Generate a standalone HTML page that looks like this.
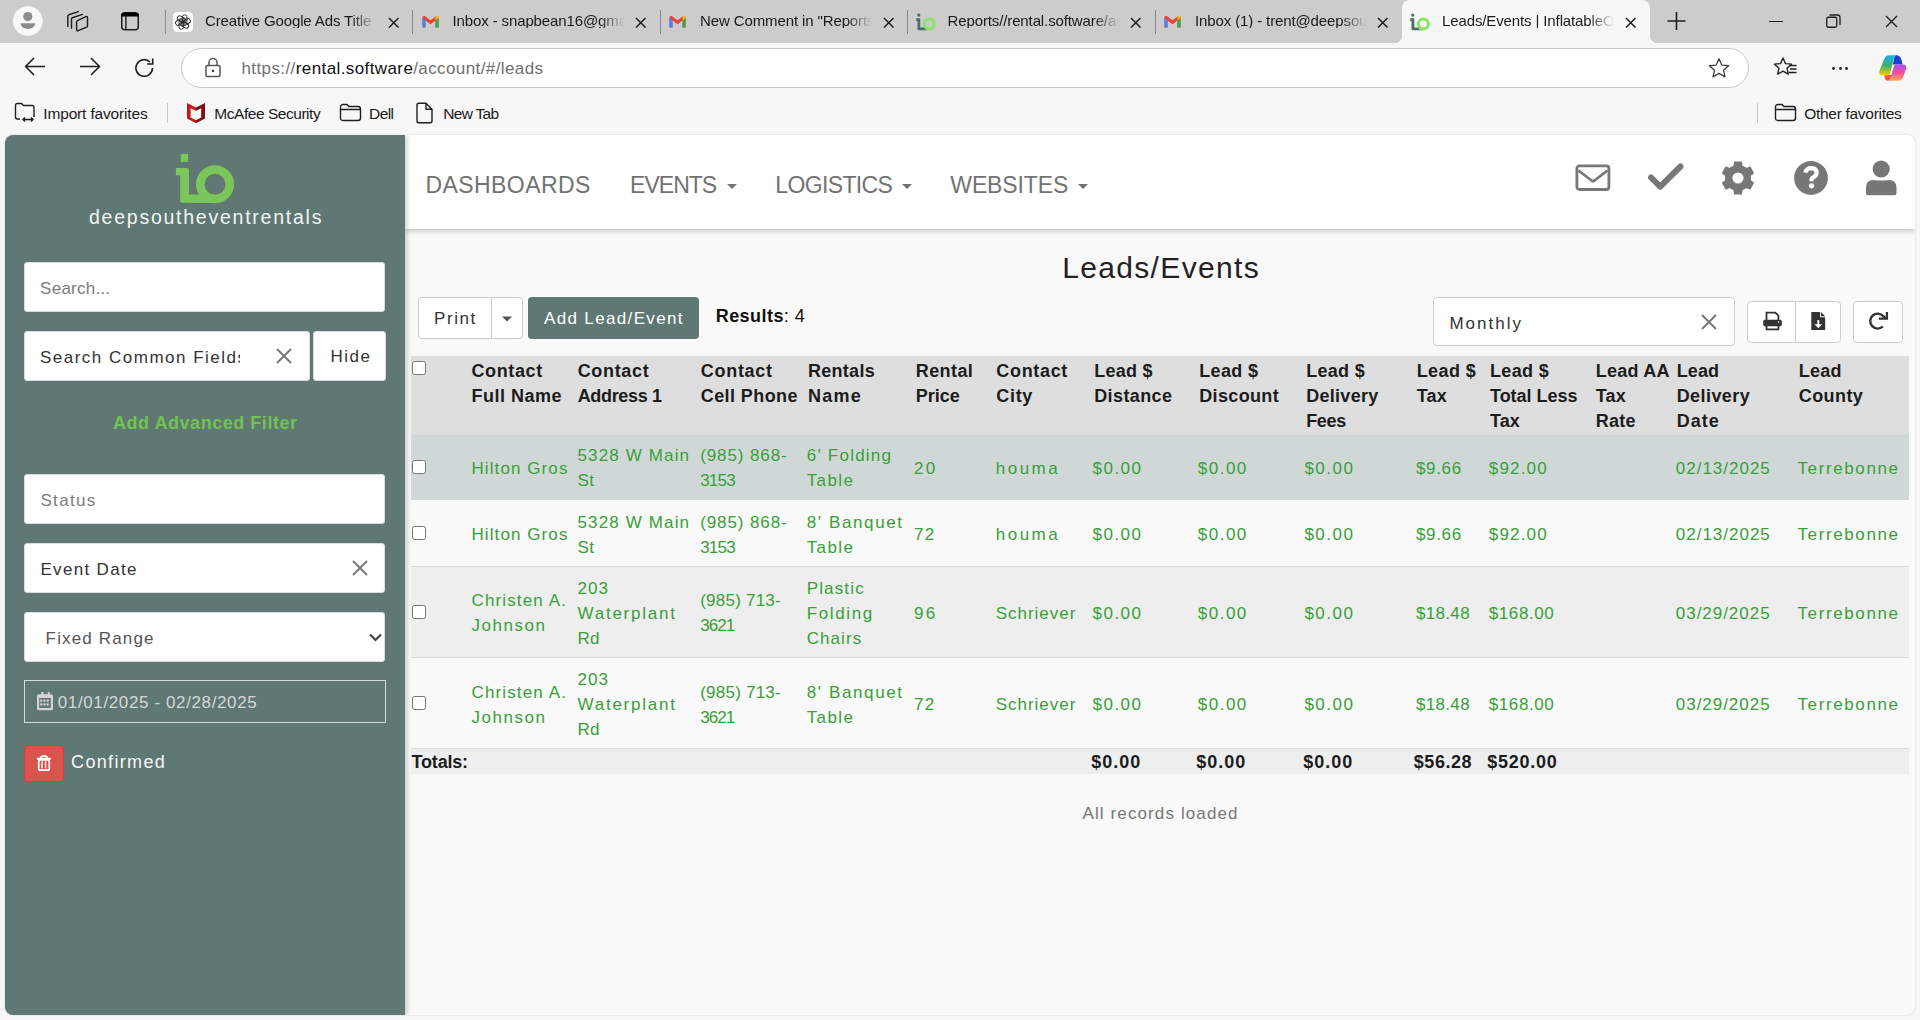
<!DOCTYPE html>
<html><head><meta charset="utf-8"><title>Leads/Events</title>
<style>
html,body{margin:0;padding:0;width:1920px;height:1020px;overflow:hidden;background:#f7f7f7;font-family:"Liberation Sans", sans-serif;}
.r{position:absolute;box-sizing:border-box;}
.t{position:absolute;white-space:nowrap;}
</style></head><body>
<div class="r" style="left:0px;top:0px;width:1920px;height:43px;background:#cccccc"></div>
<div class="r" style="left:0px;top:43px;width:1920px;height:92px;background:#f7f7f7"></div>
<svg class="r" style="left:12px;top:5px;" width="32" height="32" viewBox="0 0 32 32"><circle cx="15.8" cy="16" r="14.8" fill="#f8f8f8"/><circle cx="15.8" cy="11.6" r="4.6" fill="#8c8c8c"/><path d="M9 18.2 H22.8 Q23.2 18.2 23.1 18.8 Q22.4 23.8 15.9 23.9 Q9.4 23.8 8.7 18.8 Q8.6 18.2 9 18.2Z" fill="#8c8c8c"/></svg>
<svg class="r" style="left:64px;top:8px;" width="28" height="26" viewBox="0 0 28 26"><g fill="none" stroke="#1f1f1f" stroke-width="1.45" stroke-linejoin="round" stroke-linecap="round"><path d="M3.8 18.4 V8.2 Q3.8 7.2 4.8 6.8 L14.4 3.6"/><path d="M7.5 20.3 V11.1 Q7.5 10.1 8.5 9.7 L18.4 6.4"/><path d="M12.6 21.3 V13.8 Q12.6 12.9 13.5 12.6 L21.8 8.6 Q23.5 8 23.5 9.6 V17.8 Q23.5 18.8 22.6 19.2 L14.2 22.6 Q12.6 23.2 12.6 21.3Z"/></g></svg>
<svg class="r" style="left:119px;top:10px;" width="22" height="22" viewBox="0 0 22 22"><rect x="2.75" y="2.95" width="16.5" height="16.7" rx="3" fill="none" stroke="#1f1f1f" stroke-width="1.5"/><path d="M2 6 Q2 2.2 5.8 2.2 H16.2 Q20 2.2 20 6 V6.6 H2Z" fill="#000"/><line x1="6.9" y1="6" x2="6.9" y2="19.5" stroke="#1f1f1f" stroke-width="1.4"/></svg>
<div class="r" style="left:164.5px;top:10px;width:1.3px;height:24px;background:#8a8a8a"></div>
<svg class="r" style="left:173.0px;top:12px;" width="20" height="20" viewBox="0 0 20 20"><rect x="0" y="0" width="20" height="20" rx="4.5" fill="#fff"/><g transform="translate(10 10)" fill="none" stroke="#2a2a2a" stroke-width="0.95"><rect x="-2.3" y="-7.2" width="4.6" height="9.4" rx="2.3" transform="rotate(0) translate(1.7 0)"/><rect x="-2.3" y="-7.2" width="4.6" height="9.4" rx="2.3" transform="rotate(60) translate(1.7 0)"/><rect x="-2.3" y="-7.2" width="4.6" height="9.4" rx="2.3" transform="rotate(120) translate(1.7 0)"/><rect x="-2.3" y="-7.2" width="4.6" height="9.4" rx="2.3" transform="rotate(180) translate(1.7 0)"/><rect x="-2.3" y="-7.2" width="4.6" height="9.4" rx="2.3" transform="rotate(240) translate(1.7 0)"/><rect x="-2.3" y="-7.2" width="4.6" height="9.4" rx="2.3" transform="rotate(300) translate(1.7 0)"/></g></svg>
<div class="t" style="left:205.0px;top:13px;width:172px;overflow:hidden;font-size:15px;line-height:15px;color:#1a1a1a;letter-spacing:-0.12px;-webkit-mask-image:linear-gradient(to right,#000 85%,transparent 100%)">Creative Google Ads Title</div>
<svg class="r" style="left:387.5px;top:16.5px;" width="11.5" height="11.5" viewBox="0 0 11.5 11.5"><path d="M1 1 L10.5 10.5 M10.5 1 L1 10.5" stroke="#1f1f1f" stroke-width="1.5" fill="none"/></svg>
<div class="r" style="left:412px;top:10px;width:1.3px;height:24px;background:#8a8a8a"></div>
<svg class="r" style="left:420.5px;top:14px;" width="19" height="15" viewBox="0 0 19 15"><path d="M1.5 3.5 L1.5 13.5 L4.5 13.5 L4.5 6.5 L9.5 10.2 L14.5 6.5 L14.5 13.5 L17.5 13.5 L17.5 3.5 Q17.5 1.3 15.3 2 L9.5 6.3 L3.7 2 Q1.5 1.3 1.5 3.5Z" fill="#ea4335"/><path d="M1.5 3.5 L1.5 13.5 L4.5 13.5 L4.5 6.5Z" fill="#4285f4"/><path d="M14.5 6.5 L14.5 13.5 L17.5 13.5 L17.5 3.5Z" fill="#34a853"/><path d="M17.5 3.5 Q17.5 1.3 15.3 2 L14.5 2.6 L14.5 6.5 L17.5 4.3Z" fill="#fbbc04"/></svg>
<div class="t" style="left:452.5px;top:13px;width:172px;overflow:hidden;font-size:15px;line-height:15px;color:#1a1a1a;letter-spacing:-0.12px;-webkit-mask-image:linear-gradient(to right,#000 85%,transparent 100%)">Inbox - snapbean16@gmail.com</div>
<svg class="r" style="left:635px;top:16.5px;" width="11.5" height="11.5" viewBox="0 0 11.5 11.5"><path d="M1 1 L10.5 10.5 M10.5 1 L1 10.5" stroke="#1f1f1f" stroke-width="1.5" fill="none"/></svg>
<div class="r" style="left:659.6px;top:10px;width:1.3px;height:24px;background:#8a8a8a"></div>
<svg class="r" style="left:668.1px;top:14px;" width="19" height="15" viewBox="0 0 19 15"><path d="M1.5 3.5 L1.5 13.5 L4.5 13.5 L4.5 6.5 L9.5 10.2 L14.5 6.5 L14.5 13.5 L17.5 13.5 L17.5 3.5 Q17.5 1.3 15.3 2 L9.5 6.3 L3.7 2 Q1.5 1.3 1.5 3.5Z" fill="#ea4335"/><path d="M1.5 3.5 L1.5 13.5 L4.5 13.5 L4.5 6.5Z" fill="#4285f4"/><path d="M14.5 6.5 L14.5 13.5 L17.5 13.5 L17.5 3.5Z" fill="#34a853"/><path d="M17.5 3.5 Q17.5 1.3 15.3 2 L14.5 2.6 L14.5 6.5 L17.5 4.3Z" fill="#fbbc04"/></svg>
<div class="t" style="left:700.1px;top:13px;width:172px;overflow:hidden;font-size:15px;line-height:15px;color:#1a1a1a;letter-spacing:-0.12px;-webkit-mask-image:linear-gradient(to right,#000 85%,transparent 100%)">New Comment in &quot;Reports&quot; and more</div>
<svg class="r" style="left:882.5px;top:16.5px;" width="11.5" height="11.5" viewBox="0 0 11.5 11.5"><path d="M1 1 L10.5 10.5 M10.5 1 L1 10.5" stroke="#1f1f1f" stroke-width="1.5" fill="none"/></svg>
<div class="r" style="left:907px;top:10px;width:1.3px;height:24px;background:#8a8a8a"></div>
<svg class="r" style="left:915.5px;top:12px;" width="20" height="19" viewBox="0 0 20 19"><circle cx="2.8" cy="3.1" r="1.6" fill="#4f6b66"/><path d="M0.2 6.2 H3.2 Q4.3 6.2 4.3 7.3 V15.6 H12 V18.2 H2.8 Q1.5 18.2 1.5 16.9 V8.9 H0.2Z" fill="#4f6b66"/><circle cx="13.4" cy="12" r="4.95" fill="none" stroke="#8be368" stroke-width="3.1"/><path d="M9 15.6 H13.4 V18.2 H9Z" fill="#8be368" opacity="0.6"/></svg>
<div class="t" style="left:947.5px;top:13px;width:172px;overflow:hidden;font-size:15px;line-height:15px;color:#1a1a1a;letter-spacing:-0.12px;-webkit-mask-image:linear-gradient(to right,#000 85%,transparent 100%)">Reports//rental.software/account</div>
<svg class="r" style="left:1130px;top:16.5px;" width="11.5" height="11.5" viewBox="0 0 11.5 11.5"><path d="M1 1 L10.5 10.5 M10.5 1 L1 10.5" stroke="#1f1f1f" stroke-width="1.5" fill="none"/></svg>
<div class="r" style="left:1154.5px;top:10px;width:1.3px;height:24px;background:#8a8a8a"></div>
<svg class="r" style="left:1163.0px;top:14px;" width="19" height="15" viewBox="0 0 19 15"><path d="M1.5 3.5 L1.5 13.5 L4.5 13.5 L4.5 6.5 L9.5 10.2 L14.5 6.5 L14.5 13.5 L17.5 13.5 L17.5 3.5 Q17.5 1.3 15.3 2 L9.5 6.3 L3.7 2 Q1.5 1.3 1.5 3.5Z" fill="#ea4335"/><path d="M1.5 3.5 L1.5 13.5 L4.5 13.5 L4.5 6.5Z" fill="#4285f4"/><path d="M14.5 6.5 L14.5 13.5 L17.5 13.5 L17.5 3.5Z" fill="#34a853"/><path d="M17.5 3.5 Q17.5 1.3 15.3 2 L14.5 2.6 L14.5 6.5 L17.5 4.3Z" fill="#fbbc04"/></svg>
<div class="t" style="left:1195.0px;top:13px;width:172px;overflow:hidden;font-size:15px;line-height:15px;color:#1a1a1a;letter-spacing:-0.12px;-webkit-mask-image:linear-gradient(to right,#000 85%,transparent 100%)">Inbox (1) - trent@deepsouthevent</div>
<svg class="r" style="left:1377px;top:16.5px;" width="11.5" height="11.5" viewBox="0 0 11.5 11.5"><path d="M1 1 L10.5 10.5 M10.5 1 L1 10.5" stroke="#1f1f1f" stroke-width="1.5" fill="none"/></svg>
<div class="r" style="left:1402px;top:0;width:248px;height:43px;background:#f7f7f7;border-radius:8px 8px 0 0"></div>
<div class="r" style="left:1394px;top:35px;width:8px;height:8px;background:radial-gradient(circle at 0 0,transparent 8px,#f7f7f7 8.5px)"></div>
<div class="r" style="left:1650px;top:35px;width:8px;height:8px;background:radial-gradient(circle at 100% 0,transparent 8px,#f7f7f7 8.5px)"></div>
<svg class="r" style="left:1410px;top:12px;" width="20" height="19" viewBox="0 0 20 19"><circle cx="2.8" cy="3.1" r="1.6" fill="#4f6b66"/><path d="M0.2 6.2 H3.2 Q4.3 6.2 4.3 7.3 V15.6 H12 V18.2 H2.8 Q1.5 18.2 1.5 16.9 V8.9 H0.2Z" fill="#4f6b66"/><circle cx="13.4" cy="12" r="4.95" fill="none" stroke="#8be368" stroke-width="3.1"/><path d="M9 15.6 H13.4 V18.2 H9Z" fill="#8be368" opacity="0.6"/></svg>
<div class="t" style="left:1442px;top:13px;width:172px;overflow:hidden;font-size:15px;line-height:15px;color:#1a1a1a;letter-spacing:-0.12px;-webkit-mask-image:linear-gradient(to right,#000 85%,transparent 100%)">Leads/Events | InflatableOffice</div>
<svg class="r" style="left:1625px;top:16.5px;" width="11.5" height="11.5" viewBox="0 0 11.5 11.5"><path d="M1 1 L10.5 10.5 M10.5 1 L1 10.5" stroke="#1f1f1f" stroke-width="1.5" fill="none"/></svg>
<svg class="r" style="left:1667px;top:12px;" width="19" height="18" viewBox="0 0 19 18"><path d="M9.5 0 V18 M0.5 9 H18.5" stroke="#1f1f1f" stroke-width="1.6"/></svg>
<div class="r" style="left:1769px;top:20.5px;width:14px;height:1.2px;background:#1f1f1f"></div>
<svg class="r" style="left:1826px;top:14px;" width="15" height="14" viewBox="0 0 15 14"><rect x="0.75" y="3.25" width="10" height="10" rx="1.5" fill="none" stroke="#1f1f1f" stroke-width="1.3"/><path d="M3.5 1 H11.5 Q14 1 14 3.5 V11" fill="none" stroke="#1f1f1f" stroke-width="1.3"/></svg>
<svg class="r" style="left:1885px;top:15px;" width="13" height="13" viewBox="0 0 13 13"><path d="M1 1 L12 12 M12 1 L1 12" stroke="#1f1f1f" stroke-width="1.4" fill="none"/></svg>
<svg class="r" style="left:24px;top:57px;" width="22" height="20" viewBox="0 0 22 20"><path d="M10 1 L1.5 9.5 L10 18 M1.5 9.5 H21" fill="none" stroke="#1f1f1f" stroke-width="1.6" stroke-linejoin="round"/></svg>
<svg class="r" style="left:79px;top:57px;" width="22" height="20" viewBox="0 0 22 20"><path d="M12 1 L20.5 9.5 L12 18 M20.5 9.5 H1" fill="none" stroke="#1f1f1f" stroke-width="1.6" stroke-linejoin="round"/></svg>
<svg class="r" style="left:134px;top:57px;" width="22" height="22" viewBox="0 0 22 22"><path d="M18.5 11 A8.3 8.3 0 1 1 16 5" fill="none" stroke="#1f1f1f" stroke-width="1.6"/><path d="M18.7 1.5 V7 H13.2" fill="none" stroke="#1f1f1f" stroke-width="1.6"/></svg>
<div class="r" style="left:181px;top:48px;width:1568px;height:40px;background:#fff;border:1px solid #c9c9c9;border-radius:20px"></div>
<svg class="r" style="left:204px;top:57px;" width="18" height="21" viewBox="0 0 18 21"><path d="M5 8.5 V5.5 A4 4 0 0 1 13 5.5 V8.5" fill="none" stroke="#555" stroke-width="1.5"/><rect x="2" y="8.5" width="14" height="11" rx="1.5" fill="none" stroke="#555" stroke-width="1.5"/><circle cx="9" cy="14" r="1.2" fill="#333"/></svg>
<div class="t" style="left:241.5px;top:60px;font-size:17px;line-height:17px;color:#6f6f6f;letter-spacing:0.4px">https://<span style="color:#111">rental.software</span>/account/#/leads</div>
<svg class="r" style="left:1707px;top:57px;" width="24" height="22" viewBox="0 0 24 22"><path d="M12 1.8 L14.8 8.1 L21.6 8.7 L16.5 13.2 L18 19.9 L12 16.4 L6 19.9 L7.5 13.2 L2.4 8.7 L9.2 8.1 Z" fill="none" stroke="#3a3a3a" stroke-width="1.25" stroke-linejoin="round"/></svg>
<svg class="r" style="left:1773px;top:56px;" width="26" height="24" viewBox="0 0 26 24"><path d="M10 2 L12.5 7.6 L18.5 8.2 L14 12.2 L15.3 18.2 L10 15.1 L4.7 18.2 L6 12.2 L1.5 8.2 L7.5 7.6 Z" fill="none" stroke="#1f1f1f" stroke-width="1.35" stroke-linejoin="round"/><path d="M16.5 9.5 H23.5 M17 13 H23.5 M16 16.5 H23.5" stroke="#1f1f1f" stroke-width="1.35"/></svg>
<svg class="r" style="left:1832.0px;top:66.5px;" width="3" height="3" viewBox="0 0 3 3"><circle cx="1.5" cy="1.5" r="1.4" fill="#1f1f1f"/></svg>
<svg class="r" style="left:1838.5px;top:66.5px;" width="3" height="3" viewBox="0 0 3 3"><circle cx="1.5" cy="1.5" r="1.4" fill="#1f1f1f"/></svg>
<svg class="r" style="left:1845.0px;top:66.5px;" width="3" height="3" viewBox="0 0 3 3"><circle cx="1.5" cy="1.5" r="1.4" fill="#1f1f1f"/></svg>
<svg class="r" style="left:1878px;top:54px;" width="30" height="28" viewBox="0 0 30 28"><defs><linearGradient id="cg1" x1="0" y1="0" x2="0" y2="1"><stop offset="0" stop-color="#16b4f4"/><stop offset="0.5" stop-color="#3cae6a"/><stop offset="1" stop-color="#f2d000"/></linearGradient><linearGradient id="cg2" x1="0" y1="0" x2="0" y2="1"><stop offset="0" stop-color="#b04cf4"/><stop offset="0.5" stop-color="#f24e9a"/><stop offset="1" stop-color="#fba85a"/></linearGradient></defs><path d="M18 1.2 Q21.8 1 23.2 5 L24.6 10.5 L14.8 10.5 L16 5 Q16.8 1.4 18 1.2Z" fill="#1d3fd6"/><path d="M6.5 21 L14.2 21 L12.8 25 Q12 26.7 9.8 26.7 Q7.2 26.5 6.6 23.5Z" fill="#f2553a"/><path d="M6.5 4.2 Q7.8 1.2 11.5 1.2 L18.4 1.2 Q16.6 1.8 15.8 5 L12 19.5 Q11.4 21.2 9.5 21.2 L3.5 21.2 Q0.6 21 1.2 17.5Z" fill="url(#cg1)"/><path d="M17.5 10.6 L25 10.6 Q28.8 10.8 28.2 14.5 L25 23.5 Q23.8 26.7 20.2 26.7 L9.6 26.7 Q11.8 26.3 12.6 23.2L16 12.2 Q16.4 10.6 17.5 10.6Z" fill="url(#cg2)"/></svg>
<svg class="r" style="left:14px;top:102px;" width="22" height="21" viewBox="0 0 22 21"><path d="M1.5 15 V3.5 Q1.5 1.5 3.5 1.5 H7.5 L9.5 3.5 H18 Q20 3.5 20 5.5 V15" fill="none" stroke="#1f1f1f" stroke-width="1.4"/><path d="M1.5 15 Q1.5 17 3.5 17 H6" fill="none" stroke="#1f1f1f" stroke-width="1.4"/><path d="M9 17.5 H19 M11 15.5 L9 17.5 L11 19.5 M17 15.5 L19 17.5 L17 19.5" fill="none" stroke="#1f1f1f" stroke-width="1.4"/></svg>
<div class="t " style="left:43.30px;top:106px;font-size:15.50px;line-height:15.50px;color:#1a1a1a;letter-spacing:-0.161px;">Import favorites</div>
<div class="r" style="left:167px;top:103px;width:1px;height:20px;background:#c8c8c8"></div>
<svg class="r" style="left:186px;top:102px;" width="20" height="22" viewBox="0 0 20 22"><path d="M1 1 L10 5.5 L10 8.8 L4.6 6.2 L4.6 15.6 L10 18.3 L10 21.2 L1 16.6Z" fill="#c8141c"/><path d="M19 1 L10 5.5 L10 8.8 L15.2 6.2 L15.2 15.6 L10 18.3 L10 21.2 L19 16.6Z" fill="#7d1010"/></svg>
<div class="t " style="left:214.30px;top:106px;font-size:15.50px;line-height:15.50px;color:#1a1a1a;letter-spacing:-0.461px;">McAfee Security</div>
<svg class="r" style="left:339px;top:103px;" width="23" height="19" viewBox="0 0 23 19"><path d="M1.5 4 Q1.5 1.5 4 1.5 H8 L10 3.5 H19 Q21.5 3.5 21.5 6 V15 Q21.5 17.5 19 17.5 H4 Q1.5 17.5 1.5 15Z M1.5 6.5 H21.5" fill="none" stroke="#1f1f1f" stroke-width="1.4"/></svg>
<div class="t " style="left:369.00px;top:106px;font-size:15.50px;line-height:15.50px;color:#1a1a1a;letter-spacing:-0.566px;">Dell</div>
<svg class="r" style="left:415px;top:102px;" width="19" height="22" viewBox="0 0 19 22"><path d="M2 3 Q2 1.2 3.8 1.2 H11 L17 7.2 V19 Q17 20.8 15.2 20.8 H3.8 Q2 20.8 2 19Z M11 1.2 V7.2 H17" fill="none" stroke="#1f1f1f" stroke-width="1.4" stroke-linejoin="round"/></svg>
<div class="t " style="left:443.30px;top:106px;font-size:15.50px;line-height:15.50px;color:#1a1a1a;letter-spacing:-0.721px;">New Tab</div>
<div class="r" style="left:1757px;top:103px;width:1px;height:20px;background:#c8c8c8"></div>
<svg class="r" style="left:1774px;top:103px;" width="23" height="19" viewBox="0 0 23 19"><path d="M1.5 4 Q1.5 1.5 4 1.5 H8 L10 3.5 H19 Q21.5 3.5 21.5 6 V15 Q21.5 17.5 19 17.5 H4 Q1.5 17.5 1.5 15Z M1.5 6.5 H21.5" fill="none" stroke="#1f1f1f" stroke-width="1.4"/></svg>
<div class="t " style="left:1804.30px;top:106px;font-size:15.50px;line-height:15.50px;color:#1a1a1a;letter-spacing:-0.303px;">Other favorites</div>
<div class="r" style="left:5px;top:135px;width:1910px;height:880px;border-radius:8px;background:#f9f9f9;box-shadow:0 0 2px rgba(0,0,0,0.18);overflow:hidden"><div class="r" style="left:400px;top:0;width:1510px;height:94px;background:#fff;box-shadow:0 2px 5px rgba(0,0,0,0.22)"></div><div class="r" style="left:0;top:0;width:400px;height:880px;background:#5f7873;box-shadow:2px 0 5px rgba(0,0,0,0.2)"></div></div>
<svg class="r" style="left:170px;top:150px;" width="70" height="56" viewBox="0 0 70 56"><g fill="#7bc65a"><rect x="10.8" y="3.9" width="7.3" height="8"/><path d="M5.9 17.9 H17 Q19 17.9 19 19.9 V44.7 H45 V52.8 H12.7 Q10.2 52.8 10.2 50.3 V25.2 H5.9 Z"/></g><circle cx="45" cy="34.3" r="14.75" fill="none" stroke="#7bc65a" stroke-width="8.5"/><rect x="19" y="44.7" width="26" height="8.1" fill="#7bc65a"/></svg>
<div class="t " style="left:89.00px;top:208px;font-size:19.50px;line-height:19.50px;color:#f4f4f4;letter-spacing:1.754px;">deepsoutheventrentals</div>
<div class="r" style="left:24px;top:262px;width:361px;height:50px;background:#fff;border:1px solid #dcdcdc;border-radius:3px;"></div>
<div class="t " style="left:40.10px;top:280px;font-size:17.00px;line-height:17.00px;color:#7c7c7c;letter-spacing:0.246px;">Search...</div>
<div class="r" style="left:24px;top:331px;width:286px;height:50px;background:#fff;border:1px solid #dcdcdc;border-radius:3px;"></div>
<div class="r" style="left:40px;top:349px;width:199.5px;height:24px;overflow:hidden"><div class="t" style="left:0;top:0;font-size:17px;line-height:17px;color:#333;letter-spacing:1.49px;white-space:nowrap">Search Common Fields</div></div>
<svg class="r" style="left:276px;top:348px;" width="16" height="16" viewBox="0 0 16 16"><path d="M1 1 L15 15 M15 1 L1 15" stroke="#777" stroke-width="1.9"/></svg>
<div class="r" style="left:313px;top:331px;width:73px;height:50px;background:#fff;border:1px solid #dcdcdc;border-radius:3px;"></div>
<div class="t " style="left:330.40px;top:348px;font-size:17.00px;line-height:17.00px;color:#333;letter-spacing:1.546px;">Hide</div>
<div class="t " style="left:113.00px;top:414px;font-size:18.00px;line-height:18.00px;color:#72c34f;font-weight:bold;letter-spacing:0.536px;">Add Advanced Filter</div>
<div class="r" style="left:24px;top:474px;width:361px;height:50px;background:#fff;border:1px solid #dcdcdc;border-radius:3px;"></div>
<div class="t " style="left:40.40px;top:492px;font-size:17.00px;line-height:17.00px;color:#7c7c7c;letter-spacing:1.341px;">Status</div>
<div class="r" style="left:24px;top:543px;width:361px;height:50px;background:#fff;border:1px solid #dcdcdc;border-radius:3px;"></div>
<div class="t " style="left:40.40px;top:561px;font-size:17.00px;line-height:17.00px;color:#333;letter-spacing:1.332px;">Event Date</div>
<svg class="r" style="left:352px;top:560px;" width="16" height="16" viewBox="0 0 16 16"><path d="M1 1 L15 15 M15 1 L1 15" stroke="#777" stroke-width="1.9"/></svg>
<div class="r" style="left:24px;top:612px;width:361px;height:50px;background:#fff;border:1px solid #dcdcdc;border-radius:3px;"></div>
<div class="t " style="left:45.60px;top:630px;font-size:17.00px;line-height:17.00px;color:#555;letter-spacing:1.151px;">Fixed Range</div>
<svg class="r" style="left:369px;top:633px;" width="13" height="9" viewBox="0 0 13 9"><path d="M1 1.5 L6.5 7 L12 1.5" fill="none" stroke="#444" stroke-width="2.2"/></svg>
<div class="r" style="left:24px;top:680px;width:362px;height:43px;border:1px solid #d4dad9"></div>
<svg class="r" style="left:36px;top:691px;" width="18" height="20" viewBox="0 0 18 20"><path d="M1 5.2 Q1 3.2 3 3.2 H15 Q17 3.2 17 5.2 V17.6 Q17 19.2 15.4 19.2 H2.6 Q1 19.2 1 17.6Z" fill="#d2d5d4"/><rect x="5.3" y="1" width="2.4" height="3.5" rx="0.9" fill="#d2d5d4"/><rect x="11.6" y="1" width="2.4" height="3.5" rx="0.9" fill="#d2d5d4"/><rect x="3.2" y="7" width="11.6" height="10" fill="#5f7873"/><g fill="#d2d5d4"><rect x="4.2" y="8.6" width="2.2" height="2.2" rx="0.5"/><rect x="7.4" y="8.6" width="2.2" height="2.2" rx="0.5"/><rect x="10.6" y="8.6" width="2.2" height="2.2" rx="0.5"/><rect x="4.2" y="12.2" width="2.2" height="2.2" rx="0.5"/><rect x="7.4" y="12.2" width="2.2" height="2.2" rx="0.5"/><rect x="10.6" y="12.2" width="2.2" height="2.2" rx="0.5"/></g></svg>
<div class="t " style="left:57.80px;top:694px;font-size:17.00px;line-height:17.00px;color:#d4d7d6;letter-spacing:0.619px;">01/01/2025 - 02/28/2025</div>
<div class="r" style="left:24px;top:745px;width:40px;height:37px;background:#d9534f;border-radius:4px;border:1px solid #d43f3a"></div>
<svg class="r" style="left:36px;top:754px;" width="16" height="19" viewBox="0 0 16 19"><path d="M4.3 4.4 Q4.9 1.9 7.9 1.9 Q10.9 1.9 11.5 4.4" fill="none" stroke="#fff" stroke-width="1.6"/><rect x="0.9" y="3.8" width="14" height="2.1" rx="0.8" fill="#fff"/><rect x="2.75" y="6" width="10.5" height="10.2" rx="1" fill="none" stroke="#fff" stroke-width="1.7"/><rect x="5.3" y="7.3" width="1.4" height="7" fill="#fff"/><rect x="8.9" y="7.3" width="1.4" height="7" fill="#fff"/></svg>
<div class="t " style="left:71.10px;top:753px;font-size:18.00px;line-height:18.00px;color:#f7f7f7;letter-spacing:1.333px;">Confirmed</div>
<div class="t " style="left:425.60px;top:174px;font-size:23.00px;line-height:23.00px;color:#727272;letter-spacing:0.407px;">DASHBOARDS</div>
<div class="t " style="left:630.10px;top:174px;font-size:23.00px;line-height:23.00px;color:#727272;letter-spacing:-0.985px;">EVENTS</div>
<div class="t " style="left:775.30px;top:174px;font-size:23.00px;line-height:23.00px;color:#727272;letter-spacing:-0.637px;">LOGISTICS</div>
<div class="t " style="left:950.30px;top:174px;font-size:23.00px;line-height:23.00px;color:#727272;letter-spacing:-0.122px;">WEBSITES</div>
<svg class="r" style="left:727px;top:183.5px;" width="10" height="5" viewBox="0 0 10 5"><path d="M0 0 H10 L5 5Z" fill="#727272"/></svg>
<svg class="r" style="left:902px;top:183.5px;" width="10" height="5" viewBox="0 0 10 5"><path d="M0 0 H10 L5 5Z" fill="#727272"/></svg>
<svg class="r" style="left:1077.5px;top:183.5px;" width="10" height="5" viewBox="0 0 10 5"><path d="M0 0 H10 L5 5Z" fill="#727272"/></svg>
<svg class="r" style="left:1575px;top:164px;" width="37" height="28" viewBox="0 0 37 28"><rect x="1.9" y="1.9" width="32" height="23.6" rx="2.5" fill="none" stroke="#777777" stroke-width="2.8"/><path d="M3.5 6.5 L16.5 16.5 Q18 17.6 19.5 16.5 L32.5 6.5" fill="none" stroke="#777777" stroke-width="2.8"/></svg>
<svg class="r" style="left:1647px;top:163px;" width="38" height="30" viewBox="0 0 38 30"><path d="M4 14.5 L13.2 23.7 L33.5 3.5" fill="none" stroke="#777777" stroke-width="6" stroke-linecap="round" stroke-linejoin="round"/></svg>
<svg class="r" style="left:1721px;top:161px;" width="34" height="34" viewBox="0 0 34 34"><path d="M10.60 5.91 L12.41 5.05 L13.05 0.57 L20.95 0.57 L21.59 5.05 L23.40 5.91 L25.06 7.05 L29.26 5.37 L33.20 12.20 L29.64 15.00 L29.80 17.00 L29.64 19.00 L33.20 21.80 L29.26 28.63 L25.06 26.95 L23.40 28.09 L21.59 28.95 L20.95 33.43 L13.05 33.43 L12.41 28.95 L10.60 28.09 L8.94 26.95 L4.74 28.63 L0.80 21.80 L4.36 19.00 L4.20 17.00 L4.36 15.00 L0.80 12.20 L4.74 5.37 L8.94 7.05 Z" fill="#777777"/><circle cx="17" cy="17" r="12.9" fill="#777777"/><circle cx="17" cy="17" r="5.6" fill="#fff"/></svg>
<svg class="r" style="left:1793px;top:160px;" width="36" height="36" viewBox="0 0 36 36"><circle cx="18" cy="18" r="16.9" fill="#777777"/><path d="M12.2 12.6 Q13.6 8.2 18.4 8.2 Q23.6 8.4 23.6 12.8 Q23.6 15.6 20.6 17.2 Q18.5 18.3 18.5 20.2 V21.2" fill="none" stroke="#fff" stroke-width="4.2"/><circle cx="18.5" cy="25.8" r="2.6" fill="#fff"/></svg>
<svg class="r" style="left:1865px;top:159px;" width="33" height="37" viewBox="0 0 33 37"><circle cx="16.2" cy="10" r="8.6" fill="#777777"/><path d="M1 28.5 Q1 21 8.5 21 Q12 21.6 16.2 21.6 Q20.4 21.6 24 21 Q31.5 21 31.5 28.5 V34.2 Q31.5 36.2 29.5 36.2 H3 Q1 36.2 1 34.2Z" fill="#777777"/></svg>
<div class="t " style="left:1062.20px;top:253px;font-size:30.00px;line-height:30.00px;color:#222;letter-spacing:1.338px;">Leads/Events</div>
<div class="r" style="left:418px;top:297px;width:105px;height:42px;background:#fff;border:1px solid #ccc;border-radius:4px"></div>
<div class="r" style="left:491px;top:297px;width:1px;height:42px;background:#ccc"></div>
<div class="t " style="left:434.00px;top:310px;font-size:17.00px;line-height:17.00px;color:#333;letter-spacing:1.587px;">Print</div>
<svg class="r" style="left:502px;top:316px;" width="10" height="6" viewBox="0 0 10 6"><path d="M0 0.5 H10 L5 5.5Z" fill="#555"/></svg>
<div class="r" style="left:528px;top:297px;width:171px;height:42px;background:#5f7873;border-radius:4px"></div>
<div class="t " style="left:544.00px;top:310px;font-size:17.00px;line-height:17.00px;color:#fff;letter-spacing:1.348px;">Add Lead/Event</div>
<div class="t" style="left:715.70px;top:307px;font-size:18px;line-height:18px;color:#111;"><b style="letter-spacing:0.45px">Results</b><span style="letter-spacing:0.4px">: 4</span></div>
<div class="r" style="left:1433px;top:297px;width:302px;height:49px;background:#fff;border:1px solid #ccc;border-radius:4px"></div>
<div class="t " style="left:1449.40px;top:315px;font-size:17.00px;line-height:17.00px;color:#333;letter-spacing:2.012px;">Monthly</div>
<svg class="r" style="left:1701px;top:314px;" width="16" height="16" viewBox="0 0 16 16"><path d="M1 1 L15 15 M15 1 L1 15" stroke="#777" stroke-width="1.9"/></svg>
<div class="r" style="left:1747px;top:301px;width:94px;height:42px;background:#fff;border:1px solid #ccc;border-radius:4px"></div>
<div class="r" style="left:1795px;top:301px;width:1px;height:42px;background:#ccc"></div>
<div class="r" style="left:1853px;top:301px;width:50px;height:42px;background:#fff;border:1px solid #ccc;border-radius:4px"></div>
<svg class="r" style="left:1762px;top:311px;" width="21" height="20" viewBox="0 0 21 20"><path d="M4.5 9 V1.6 H13.3 L16.4 4.7 V9" fill="none" stroke="#333" stroke-width="1.8"/><rect x="1.2" y="8.8" width="18.6" height="6.4" rx="1.6" fill="#333"/><circle cx="16.6" cy="11" r="0.8" fill="#fff"/><path d="M4.5 14.5 V18.3 H16.4 V14.5" fill="none" stroke="#333" stroke-width="1.8"/></svg>
<svg class="r" style="left:1810px;top:311px;" width="17" height="20" viewBox="0 0 17 20"><path d="M1.3 1 H10 V6.3 H15.2 V19 H1.3Z" fill="#333"/><path d="M10.9 1 L15.2 5.3 H10.9Z" fill="#333"/><rect x="7.3" y="9.2" width="2" height="5" fill="#fff"/><path d="M4.4 13.3 H12.2 L8.3 17.3Z" fill="#fff"/></svg>
<svg class="r" style="left:1867px;top:310px;" width="22" height="22" viewBox="0 0 22 22"><path d="M15.9 16.5 A7.5 7.5 0 1 1 16.4 6.2 L18.6 8.4" fill="none" stroke="#333" stroke-width="2.4"/><path d="M12 8.6 H19.9 V2.1" fill="none" stroke="#333" stroke-width="2.3" stroke-linejoin="miter"/></svg>
<div class="r" style="left:411px;top:356px;width:1498px;height:79px;background:#dedede"></div>
<div class="r" style="left:411px;top:435px;width:1498px;height:65px;background:#d0d8d7"></div>
<div class="r" style="left:411px;top:500px;width:1498px;height:66px;background:#f9f9f9"></div>
<div class="r" style="left:411px;top:566px;width:1498px;height:91px;background:#eeeeee"></div>
<div class="r" style="left:411px;top:657px;width:1498px;height:91px;background:#f9f9f9"></div>
<div class="r" style="left:411px;top:748px;width:1498px;height:26px;background:#eeeeee"></div>
<div class="r" style="left:411px;top:566px;width:1498px;height:1px;background:#dcdcdc"></div>
<div class="r" style="left:411px;top:657px;width:1498px;height:1px;background:#dcdcdc"></div>
<div class="r" style="left:411px;top:748px;width:1498px;height:1px;background:#dcdcdc"></div>
<div class="r" style="left:412px;top:361px;width:14px;height:14px;background:#fff;border:1px solid #767676;border-radius:2.5px"></div>
<div class="r" style="left:412px;top:460px;width:14px;height:14px;background:#fff;border:1px solid #767676;border-radius:2.5px"></div>
<div class="r" style="left:412px;top:526px;width:14px;height:14px;background:#fff;border:1px solid #767676;border-radius:2.5px"></div>
<div class="r" style="left:412px;top:605px;width:14px;height:14px;background:#fff;border:1px solid #767676;border-radius:2.5px"></div>
<div class="r" style="left:412px;top:696px;width:14px;height:14px;background:#fff;border:1px solid #767676;border-radius:2.5px"></div>
<div class="t " style="left:471.40px;top:362px;font-size:18.00px;line-height:18.00px;color:#1c1c1c;font-weight:bold;letter-spacing:0.634px;">Contact</div>
<div class="t " style="left:471.40px;top:387px;font-size:18.00px;line-height:18.00px;color:#1c1c1c;font-weight:bold;letter-spacing:0.510px;">Full Name</div>
<div class="t " style="left:577.70px;top:362px;font-size:18.00px;line-height:18.00px;color:#1c1c1c;font-weight:bold;letter-spacing:0.667px;">Contact</div>
<div class="t " style="left:577.70px;top:387px;font-size:18.00px;line-height:18.00px;color:#1c1c1c;font-weight:bold;letter-spacing:-0.330px;">Address 1</div>
<div class="t " style="left:700.80px;top:362px;font-size:18.00px;line-height:18.00px;color:#1c1c1c;font-weight:bold;letter-spacing:0.701px;">Contact</div>
<div class="t " style="left:700.80px;top:387px;font-size:18.00px;line-height:18.00px;color:#1c1c1c;font-weight:bold;letter-spacing:0.409px;">Cell Phone</div>
<div class="t " style="left:808.00px;top:362px;font-size:18.00px;line-height:18.00px;color:#1c1c1c;font-weight:bold;letter-spacing:0.279px;">Rentals</div>
<div class="t " style="left:808.00px;top:387px;font-size:18.00px;line-height:18.00px;color:#1c1c1c;font-weight:bold;letter-spacing:1.259px;">Name</div>
<div class="t " style="left:915.80px;top:362px;font-size:18.00px;line-height:18.00px;color:#1c1c1c;font-weight:bold;letter-spacing:0.398px;">Rental</div>
<div class="t " style="left:915.80px;top:387px;font-size:18.00px;line-height:18.00px;color:#1c1c1c;font-weight:bold;letter-spacing:-0.034px;">Price</div>
<div class="t " style="left:996.30px;top:362px;font-size:18.00px;line-height:18.00px;color:#1c1c1c;font-weight:bold;letter-spacing:0.667px;">Contact</div>
<div class="t " style="left:996.30px;top:387px;font-size:18.00px;line-height:18.00px;color:#1c1c1c;font-weight:bold;letter-spacing:0.666px;">City</div>
<div class="t " style="left:1094.20px;top:362px;font-size:18.00px;line-height:18.00px;color:#1c1c1c;font-weight:bold;letter-spacing:0.255px;">Lead $</div>
<div class="t " style="left:1094.20px;top:387px;font-size:18.00px;line-height:18.00px;color:#1c1c1c;font-weight:bold;letter-spacing:0.395px;">Distance</div>
<div class="t " style="left:1199.20px;top:362px;font-size:18.00px;line-height:18.00px;color:#1c1c1c;font-weight:bold;letter-spacing:0.355px;">Lead $</div>
<div class="t " style="left:1199.20px;top:387px;font-size:18.00px;line-height:18.00px;color:#1c1c1c;font-weight:bold;letter-spacing:0.357px;">Discount</div>
<div class="t " style="left:1306.20px;top:362px;font-size:18.00px;line-height:18.00px;color:#1c1c1c;font-weight:bold;letter-spacing:0.295px;">Lead $</div>
<div class="t " style="left:1306.20px;top:387px;font-size:18.00px;line-height:18.00px;color:#1c1c1c;font-weight:bold;letter-spacing:0.293px;">Delivery</div>
<div class="t " style="left:1306.20px;top:412px;font-size:18.00px;line-height:18.00px;color:#1c1c1c;font-weight:bold;letter-spacing:-0.310px;">Fees</div>
<div class="t " style="left:1416.70px;top:362px;font-size:18.00px;line-height:18.00px;color:#1c1c1c;font-weight:bold;letter-spacing:0.415px;">Lead $</div>
<div class="t " style="left:1416.70px;top:387px;font-size:18.00px;line-height:18.00px;color:#1c1c1c;font-weight:bold;letter-spacing:0.159px;">Tax</div>
<div class="t " style="left:1490.00px;top:362px;font-size:18.00px;line-height:18.00px;color:#1c1c1c;font-weight:bold;letter-spacing:0.355px;">Lead $</div>
<div class="t " style="left:1490.00px;top:387px;font-size:18.00px;line-height:18.00px;color:#1c1c1c;font-weight:bold;letter-spacing:-0.021px;">Total Less</div>
<div class="t " style="left:1490.00px;top:412px;font-size:18.00px;line-height:18.00px;color:#1c1c1c;font-weight:bold;">Tax</div>
<div class="t " style="left:1595.80px;top:362px;font-size:18.00px;line-height:18.00px;color:#1c1c1c;font-weight:bold;letter-spacing:0.226px;">Lead AA</div>
<div class="t " style="left:1595.80px;top:387px;font-size:18.00px;line-height:18.00px;color:#1c1c1c;font-weight:bold;letter-spacing:0.159px;">Tax</div>
<div class="t " style="left:1595.80px;top:412px;font-size:18.00px;line-height:18.00px;color:#1c1c1c;font-weight:bold;letter-spacing:0.228px;">Rate</div>
<div class="t " style="left:1676.70px;top:362px;font-size:18.00px;line-height:18.00px;color:#1c1c1c;font-weight:bold;letter-spacing:0.129px;">Lead</div>
<div class="t " style="left:1676.70px;top:387px;font-size:18.00px;line-height:18.00px;color:#1c1c1c;font-weight:bold;letter-spacing:0.422px;">Delivery</div>
<div class="t " style="left:1676.70px;top:412px;font-size:18.00px;line-height:18.00px;color:#1c1c1c;font-weight:bold;letter-spacing:0.995px;">Date</div>
<div class="t " style="left:1798.80px;top:362px;font-size:18.00px;line-height:18.00px;color:#1c1c1c;font-weight:bold;letter-spacing:0.229px;">Lead</div>
<div class="t " style="left:1798.80px;top:387px;font-size:18.00px;line-height:18.00px;color:#1c1c1c;font-weight:bold;letter-spacing:0.402px;">County</div>
<div class="t " style="left:471.50px;top:460px;font-size:17.00px;line-height:17.00px;color:#38a038;letter-spacing:1.087px;">Hilton Gros</div>
<div class="t " style="left:577.50px;top:447px;font-size:17.00px;line-height:17.00px;color:#38a038;letter-spacing:1.134px;">5328 W Main</div>
<div class="t " style="left:577.50px;top:472px;font-size:17.00px;line-height:17.00px;color:#38a038;letter-spacing:0.435px;">St</div>
<div class="t " style="left:700.20px;top:447px;font-size:17.00px;line-height:17.00px;color:#38a038;letter-spacing:0.896px;">(985) 868-</div>
<div class="t " style="left:700.20px;top:472px;font-size:17.00px;line-height:17.00px;color:#38a038;letter-spacing:-0.806px;">3153</div>
<div class="t " style="left:806.70px;top:447px;font-size:17.00px;line-height:17.00px;color:#38a038;letter-spacing:1.236px;">6' Folding</div>
<div class="t " style="left:806.70px;top:472px;font-size:17.00px;line-height:17.00px;color:#38a038;letter-spacing:1.390px;">Table</div>
<div class="t " style="left:914.00px;top:460px;font-size:17.00px;line-height:17.00px;color:#38a038;letter-spacing:2.287px;">20</div>
<div class="t " style="left:995.80px;top:460px;font-size:17.00px;line-height:17.00px;color:#38a038;letter-spacing:2.478px;">houma</div>
<div class="t " style="left:1092.50px;top:460px;font-size:17.00px;line-height:17.00px;color:#38a038;letter-spacing:1.489px;">$0.00</div>
<div class="t " style="left:1197.80px;top:460px;font-size:17.00px;line-height:17.00px;color:#38a038;letter-spacing:1.489px;">$0.00</div>
<div class="t " style="left:1304.40px;top:460px;font-size:17.00px;line-height:17.00px;color:#38a038;letter-spacing:1.489px;">$0.00</div>
<div class="t " style="left:1415.90px;top:460px;font-size:17.00px;line-height:17.00px;color:#38a038;letter-spacing:0.689px;">$9.66</div>
<div class="t " style="left:1488.75px;top:460px;font-size:17.00px;line-height:17.00px;color:#38a038;letter-spacing:1.181px;">$92.00</div>
<div class="t " style="left:1675.80px;top:460px;font-size:17.00px;line-height:17.00px;color:#38a038;letter-spacing:0.991px;">02/13/2025</div>
<div class="t " style="left:1797.50px;top:460px;font-size:17.00px;line-height:17.00px;color:#38a038;letter-spacing:1.611px;">Terrebonne</div>
<div class="t " style="left:471.50px;top:526px;font-size:17.00px;line-height:17.00px;color:#38a038;letter-spacing:1.087px;">Hilton Gros</div>
<div class="t " style="left:577.50px;top:514px;font-size:17.00px;line-height:17.00px;color:#38a038;letter-spacing:1.134px;">5328 W Main</div>
<div class="t " style="left:577.50px;top:539px;font-size:17.00px;line-height:17.00px;color:#38a038;letter-spacing:0.435px;">St</div>
<div class="t " style="left:700.20px;top:514px;font-size:17.00px;line-height:17.00px;color:#38a038;letter-spacing:0.896px;">(985) 868-</div>
<div class="t " style="left:700.20px;top:539px;font-size:17.00px;line-height:17.00px;color:#38a038;letter-spacing:-0.806px;">3153</div>
<div class="t " style="left:806.70px;top:514px;font-size:17.00px;line-height:17.00px;color:#38a038;letter-spacing:1.616px;">8' Banquet</div>
<div class="t " style="left:806.70px;top:539px;font-size:17.00px;line-height:17.00px;color:#38a038;letter-spacing:1.390px;">Table</div>
<div class="t " style="left:914.00px;top:526px;font-size:17.00px;line-height:17.00px;color:#38a038;letter-spacing:1.287px;">72</div>
<div class="t " style="left:995.80px;top:526px;font-size:17.00px;line-height:17.00px;color:#38a038;letter-spacing:2.478px;">houma</div>
<div class="t " style="left:1092.50px;top:526px;font-size:17.00px;line-height:17.00px;color:#38a038;letter-spacing:1.489px;">$0.00</div>
<div class="t " style="left:1197.80px;top:526px;font-size:17.00px;line-height:17.00px;color:#38a038;letter-spacing:1.489px;">$0.00</div>
<div class="t " style="left:1304.40px;top:526px;font-size:17.00px;line-height:17.00px;color:#38a038;letter-spacing:1.489px;">$0.00</div>
<div class="t " style="left:1415.90px;top:526px;font-size:17.00px;line-height:17.00px;color:#38a038;letter-spacing:0.689px;">$9.66</div>
<div class="t " style="left:1488.75px;top:526px;font-size:17.00px;line-height:17.00px;color:#38a038;letter-spacing:1.181px;">$92.00</div>
<div class="t " style="left:1675.80px;top:526px;font-size:17.00px;line-height:17.00px;color:#38a038;letter-spacing:0.991px;">02/13/2025</div>
<div class="t " style="left:1797.50px;top:526px;font-size:17.00px;line-height:17.00px;color:#38a038;letter-spacing:1.611px;">Terrebonne</div>
<div class="t " style="left:471.50px;top:592px;font-size:17.00px;line-height:17.00px;color:#38a038;letter-spacing:1.135px;">Christen A.</div>
<div class="t " style="left:471.50px;top:617px;font-size:17.00px;line-height:17.00px;color:#38a038;letter-spacing:1.537px;">Johnson</div>
<div class="t " style="left:577.50px;top:580px;font-size:17.00px;line-height:17.00px;color:#38a038;letter-spacing:1.068px;">203</div>
<div class="t " style="left:577.50px;top:605px;font-size:17.00px;line-height:17.00px;color:#38a038;letter-spacing:1.769px;">Waterplant</div>
<div class="t " style="left:577.50px;top:630px;font-size:17.00px;line-height:17.00px;color:#38a038;letter-spacing:0.265px;">Rd</div>
<div class="t " style="left:700.20px;top:592px;font-size:17.00px;line-height:17.00px;color:#38a038;letter-spacing:0.229px;">(985) 713-</div>
<div class="t " style="left:700.20px;top:617px;font-size:17.00px;line-height:17.00px;color:#38a038;letter-spacing:-0.939px;">3621</div>
<div class="t " style="left:806.70px;top:580px;font-size:17.00px;line-height:17.00px;color:#38a038;letter-spacing:1.154px;">Plastic</div>
<div class="t " style="left:806.70px;top:605px;font-size:17.00px;line-height:17.00px;color:#38a038;letter-spacing:1.623px;">Folding</div>
<div class="t " style="left:806.70px;top:630px;font-size:17.00px;line-height:17.00px;color:#38a038;letter-spacing:1.076px;">Chairs</div>
<div class="t " style="left:914.00px;top:605px;font-size:17.00px;line-height:17.00px;color:#38a038;letter-spacing:2.337px;">96</div>
<div class="t " style="left:995.80px;top:605px;font-size:17.00px;line-height:17.00px;color:#38a038;letter-spacing:0.963px;">Schriever</div>
<div class="t " style="left:1092.50px;top:605px;font-size:17.00px;line-height:17.00px;color:#38a038;letter-spacing:1.489px;">$0.00</div>
<div class="t " style="left:1197.80px;top:605px;font-size:17.00px;line-height:17.00px;color:#38a038;letter-spacing:1.489px;">$0.00</div>
<div class="t " style="left:1304.40px;top:605px;font-size:17.00px;line-height:17.00px;color:#38a038;letter-spacing:1.489px;">$0.00</div>
<div class="t " style="left:1415.90px;top:605px;font-size:17.00px;line-height:17.00px;color:#38a038;letter-spacing:0.341px;">$18.48</div>
<div class="t " style="left:1488.75px;top:605px;font-size:17.00px;line-height:17.00px;color:#38a038;letter-spacing:0.591px;">$168.00</div>
<div class="t " style="left:1675.80px;top:605px;font-size:17.00px;line-height:17.00px;color:#38a038;letter-spacing:0.968px;">03/29/2025</div>
<div class="t " style="left:1797.50px;top:605px;font-size:17.00px;line-height:17.00px;color:#38a038;letter-spacing:1.611px;">Terrebonne</div>
<div class="t " style="left:471.50px;top:684px;font-size:17.00px;line-height:17.00px;color:#38a038;letter-spacing:1.135px;">Christen A.</div>
<div class="t " style="left:471.50px;top:709px;font-size:17.00px;line-height:17.00px;color:#38a038;letter-spacing:1.537px;">Johnson</div>
<div class="t " style="left:577.50px;top:671px;font-size:17.00px;line-height:17.00px;color:#38a038;letter-spacing:1.068px;">203</div>
<div class="t " style="left:577.50px;top:696px;font-size:17.00px;line-height:17.00px;color:#38a038;letter-spacing:1.769px;">Waterplant</div>
<div class="t " style="left:577.50px;top:721px;font-size:17.00px;line-height:17.00px;color:#38a038;letter-spacing:0.265px;">Rd</div>
<div class="t " style="left:700.20px;top:684px;font-size:17.00px;line-height:17.00px;color:#38a038;letter-spacing:0.229px;">(985) 713-</div>
<div class="t " style="left:700.20px;top:709px;font-size:17.00px;line-height:17.00px;color:#38a038;letter-spacing:-0.939px;">3621</div>
<div class="t " style="left:806.70px;top:684px;font-size:17.00px;line-height:17.00px;color:#38a038;letter-spacing:1.616px;">8' Banquet</div>
<div class="t " style="left:806.70px;top:709px;font-size:17.00px;line-height:17.00px;color:#38a038;letter-spacing:1.390px;">Table</div>
<div class="t " style="left:914.00px;top:696px;font-size:17.00px;line-height:17.00px;color:#38a038;letter-spacing:1.287px;">72</div>
<div class="t " style="left:995.80px;top:696px;font-size:17.00px;line-height:17.00px;color:#38a038;letter-spacing:0.963px;">Schriever</div>
<div class="t " style="left:1092.50px;top:696px;font-size:17.00px;line-height:17.00px;color:#38a038;letter-spacing:1.489px;">$0.00</div>
<div class="t " style="left:1197.80px;top:696px;font-size:17.00px;line-height:17.00px;color:#38a038;letter-spacing:1.489px;">$0.00</div>
<div class="t " style="left:1304.40px;top:696px;font-size:17.00px;line-height:17.00px;color:#38a038;letter-spacing:1.489px;">$0.00</div>
<div class="t " style="left:1415.90px;top:696px;font-size:17.00px;line-height:17.00px;color:#38a038;letter-spacing:0.341px;">$18.48</div>
<div class="t " style="left:1488.75px;top:696px;font-size:17.00px;line-height:17.00px;color:#38a038;letter-spacing:0.591px;">$168.00</div>
<div class="t " style="left:1675.80px;top:696px;font-size:17.00px;line-height:17.00px;color:#38a038;letter-spacing:0.968px;">03/29/2025</div>
<div class="t " style="left:1797.50px;top:696px;font-size:17.00px;line-height:17.00px;color:#38a038;letter-spacing:1.611px;">Terrebonne</div>
<div class="t " style="left:411.60px;top:753px;font-size:18.00px;line-height:18.00px;color:#1c1c1c;font-weight:bold;letter-spacing:-0.194px;">Totals:</div>
<div class="t " style="left:1091.30px;top:753px;font-size:18.00px;line-height:18.00px;color:#1c1c1c;font-weight:bold;letter-spacing:0.989px;">$0.00</div>
<div class="t " style="left:1196.30px;top:753px;font-size:18.00px;line-height:18.00px;color:#1c1c1c;font-weight:bold;letter-spacing:0.989px;">$0.00</div>
<div class="t " style="left:1303.30px;top:753px;font-size:18.00px;line-height:18.00px;color:#1c1c1c;font-weight:bold;letter-spacing:0.989px;">$0.00</div>
<div class="t " style="left:1413.75px;top:753px;font-size:18.00px;line-height:18.00px;color:#1c1c1c;font-weight:bold;letter-spacing:0.559px;">$56.28</div>
<div class="t " style="left:1487.20px;top:753px;font-size:18.00px;line-height:18.00px;color:#1c1c1c;font-weight:bold;letter-spacing:0.772px;">$520.00</div>
<div class="t " style="left:1082.50px;top:805px;font-size:17.00px;line-height:17.00px;color:#777;letter-spacing:1.113px;">All records loaded</div>
</body></html>
